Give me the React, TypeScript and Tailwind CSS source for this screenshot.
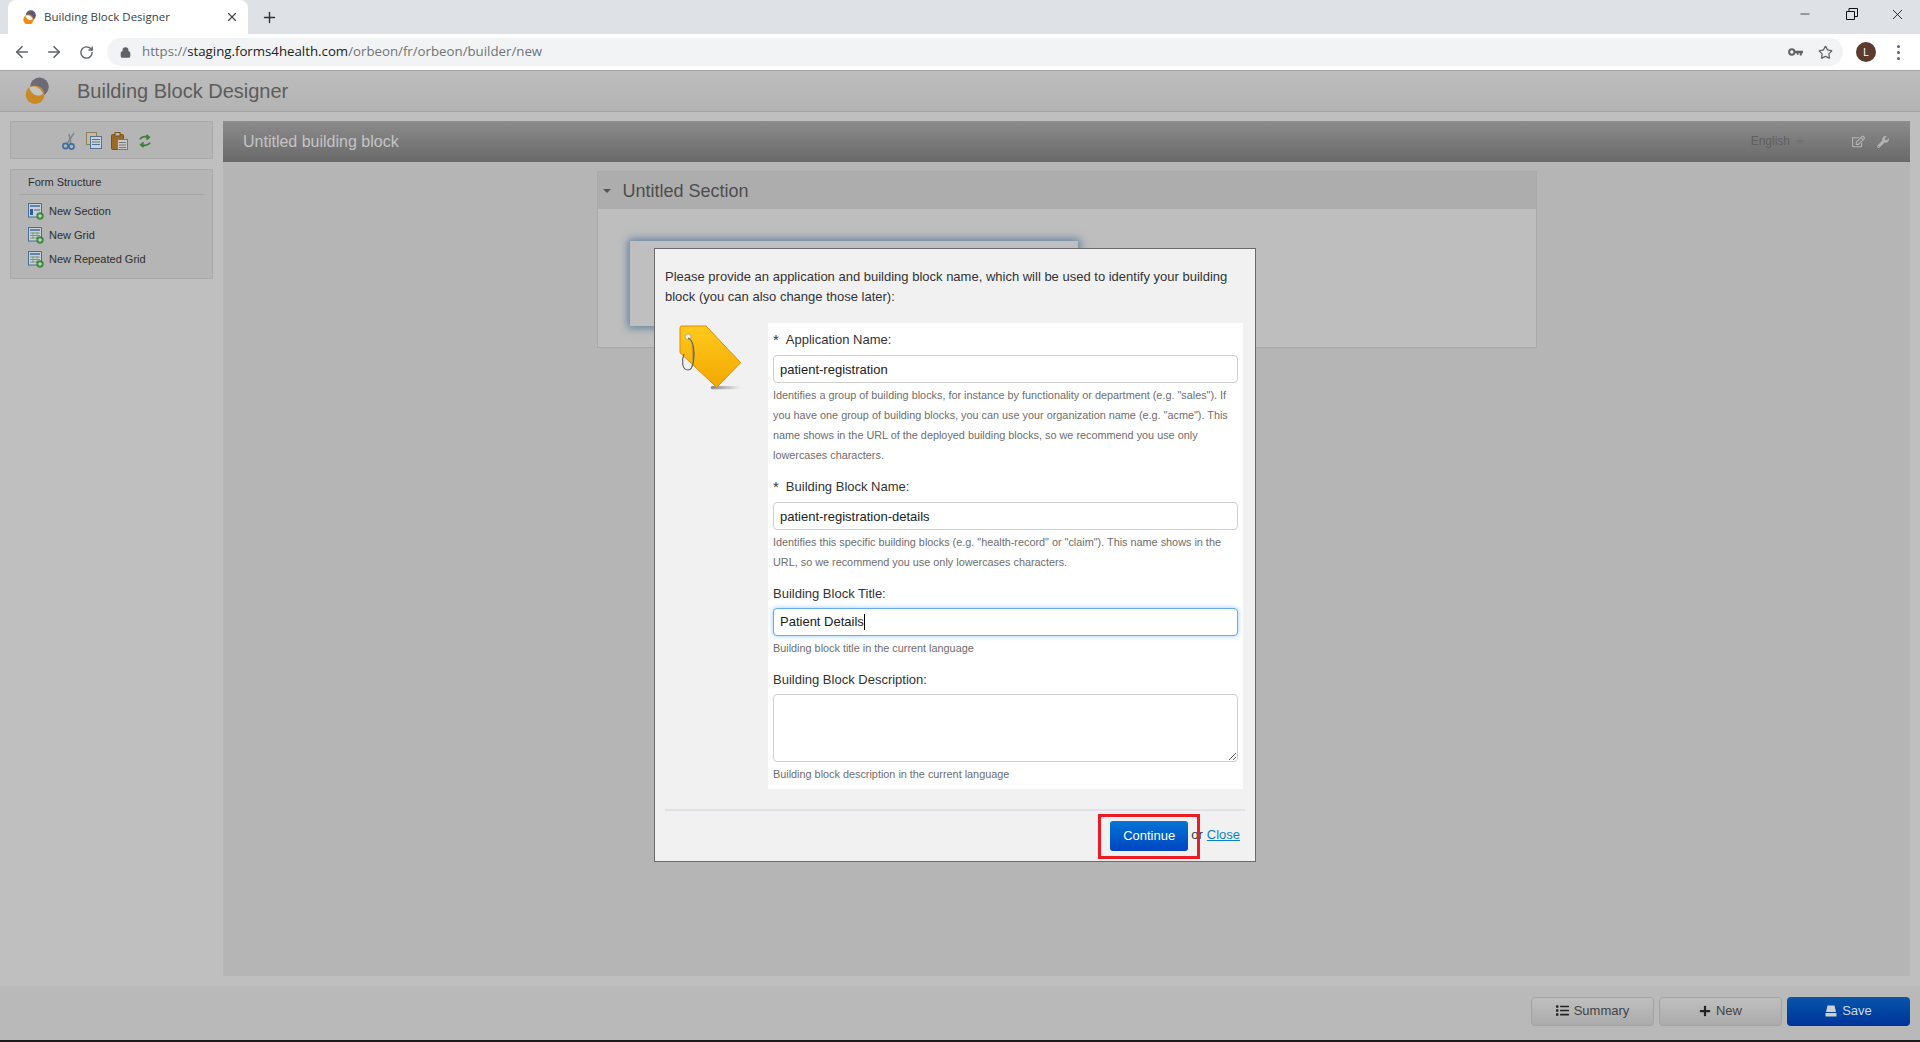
import { ArrowLeft, ArrowRight, RotateCw, Lock, Star, X, Plus, Minus } from "lucide-react";
import { FaList, FaPlus, FaWrench, FaRegEdit } from "react-icons/fa";
import type { ReactNode } from "react";

const Sans = "font-['Liberation_Sans',Arial,sans-serif]";

function Favicon({ size, dim }: { size: number; dim?: boolean }) {
  return (
    <svg width={size} height={size * 1.15} viewBox="0 0 24 28">
      <circle cx="14.5" cy="10" r="9.5" fill={dim ? "#6d6a78" : "#5e5a78"} />
      <circle cx="10" cy="18" r="9.5" fill={dim ? "#c98a24" : "#f08a12"} />
      <path d="M4 11 C8 8 15 10 18 17 C14 21 7 19 4 11 Z" fill={dim ? "#c4c4c4" : "#ffffff"} />
    </svg>
  );
}

function GridIcon({ section }: { section?: boolean }) {
  return (
    <svg width="16" height="17" viewBox="0 0 16 17">
      <rect x="0.5" y="0.5" width="13" height="13.5" fill="#c9d0d8" stroke="#4a6d9a" />
      <rect x="2" y="2" width="10" height="2" fill="#5f87b0" />
      {section ? (
        <>
          <rect x="2" y="6" width="3" height="6" fill="#2f5f9a" />
          <rect x="6" y="6" width="6" height="2" fill="#8e9aa6" />
        </>
      ) : (
        <path d="M2 6h10M2 8.5h10M2 11h10M5 5v7M9 5v7" stroke="#7d9a80" strokeWidth="1" />
      )}
      <circle cx="12" cy="13" r="3.7" fill="#3f8a3f" />
      <path d="M12 11v4M10 13h4" stroke="#d8ecd8" strokeWidth="1" />
    </svg>
  );
}

function Field({ label, required, hint, className, children }: { label: string; required?: boolean; hint: string; className: string; children: ReactNode }) {
  return (
    <div className={className}>
      <div className="flex h-5 items-center text-[13px] text-[#333]">
        {required && <span className="mr-[7px] text-[15px] leading-5">*</span>}
        <span>{label}</span>
      </div>
      {children}
      <p className="mt-[2px] text-[10.85px] leading-5 text-[#6e6e6e]">{hint}</p>
    </div>
  );
}

const inputClass = "mt-[5px] block h-7 w-full rounded-[4px] border border-[#cfcfcf] bg-white px-[6px] text-[13px] text-[#222] outline-none";

export default function App() {
  return (
    <div className={`${Sans} relative flex h-[1042px] w-[1920px] flex-col overflow-hidden bg-[#bfbfbf]`}>
      {/* browser tab strip */}
      <div className="flex h-[34px] items-end bg-[#dee1e6]">
        <div className="ml-2 flex h-[34px] w-[240px] items-center rounded-t-lg bg-white pl-[15px] pr-[9px]">
          <Favicon size={13} />
          <span className="ml-2 flex-1 font-['Open_Sans',sans-serif] text-[11.5px] text-[#3c4043]">Building Block Designer</span>
          <X size={14} className="text-[#444]" />
        </div>
        <div className="ml-[13px] flex h-[34px] items-center">
          <Plus size={17} strokeWidth={2} className="text-[#333]" />
        </div>
        <div className="ml-auto flex h-[28px] items-center self-start pr-[14px] text-[#111]">
          <Minus size={14} strokeWidth={1.2} />
          <svg width="12" height="12" viewBox="0 0 12 12" className="ml-[34px]" fill="none" stroke="#111">
            <path d="M0.5 3.5h8v8h-8zM3 3.5V0.5h8.5v8H8.5" />
          </svg>
          <X size={17} strokeWidth={1.2} className="ml-[31px]" />
        </div>
      </div>

      {/* browser toolbar */}
      <div className="flex h-9 items-center bg-white">
        <ArrowLeft size={18} strokeWidth={2.2} className="ml-[13px] text-[#5f6368]" />
        <ArrowRight size={18} strokeWidth={2.2} className="ml-[14px] text-[#5f6368]" />
        <RotateCw size={15} strokeWidth={2.2} className="ml-[16px] text-[#5f6368]" />
        <div className="ml-[13px] flex h-7 w-[1736px] items-center rounded-full bg-[#f1f3f4] pl-[13px] pr-[10px]">
          <Lock size={11} strokeWidth={3} className="text-[#5f6368]" fill="#5f6368" />
          <span className="ml-[11px] font-['Open_Sans',sans-serif] text-[13.25px] text-[#6f7377]">
            https://<span className="text-[#202124]">staging.forms4health.com</span>/orbeon/fr/orbeon/builder/new
          </span>
          <svg width="15" height="9" viewBox="0 0 15 9" className="ml-auto">
            <circle cx="3.8" cy="4" r="2.7" fill="none" stroke="#5f6368" strokeWidth="2" />
            <path d="M6 2.8h9v2.4h-1.2v2.4h-2V5.2h-1.2v1.6H8.8V5.2H6z" fill="#5f6368" />
          </svg>
          <Star size={15} strokeWidth={2} className="ml-[15px] text-[#5f6368]" />
        </div>
        <div className="ml-[13px] flex h-5 w-5 items-center justify-center rounded-full bg-[#5d3a2e] text-[10px] text-white">L</div>
        <div className="ml-[21px] flex flex-col gap-[3px]">
          <span className="h-[3px] w-[3px] rounded-full bg-[#5f6368]" />
          <span className="h-[3px] w-[3px] rounded-full bg-[#5f6368]" />
          <span className="h-[3px] w-[3px] rounded-full bg-[#5f6368]" />
        </div>
      </div>

      {/* app header */}
      <div className="flex h-[42px] items-center border-y border-[#a3a3a3] bg-gradient-to-b from-[#bdbdbd] to-[#b3b3b3] pl-[25px]">
        <Favicon size={24} dim />
        <h1 className="ml-[28px] text-[20px] font-normal text-[#5c5c5c]">Building Block Designer</h1>
      </div>

      {/* workspace */}
      <div className="flex flex-1 gap-[10px] px-[10px] pt-[9px]">
        <aside className="w-[203px] shrink-0">
          <div className="flex h-[38px] items-center justify-center gap-[9px] border border-[#a9a9a9] bg-[#b5b5b5] pr-3 pt-px">
            <svg width="16" height="18" viewBox="0 0 16 18" fill="none">
              <path d="M13 1 L6 12 M8 2 L10 12" stroke="#7c8a96" strokeWidth="1.6" />
              <circle cx="4.5" cy="14" r="2.6" stroke="#3d6fa3" strokeWidth="1.6" />
              <circle cx="10.5" cy="14.5" r="2.6" stroke="#3d6fa3" strokeWidth="1.6" />
            </svg>
            <svg width="16" height="17" viewBox="0 0 16 17">
              <rect x="0.5" y="0.5" width="10" height="12" fill="#c8bb96" stroke="#8a7f5f" />
              <rect x="4.5" y="4.5" width="11" height="12" fill="#cdd2d6" stroke="#4f7296" />
              <path d="M6 7.5h8M6 10h8M6 12.5h8" stroke="#4f7296" />
            </svg>
            <svg width="17" height="18" viewBox="0 0 17 18">
              <rect x="0.5" y="2.5" width="12" height="15" rx="1" fill="#9c6a26" stroke="#7a5218" />
              <rect x="4" y="0.5" width="5" height="3.5" fill="#b9b9b9" stroke="#7a5218" />
              <rect x="6.5" y="7.5" width="10" height="10" fill="#c9c9c9" stroke="#777" />
              <path d="M8 10.5h7M8 13h7M8 15.5h7" stroke="#777" />
            </svg>
            <svg width="12" height="14" viewBox="0 0 13 14" fill="none" stroke="#3f7f3f" strokeWidth="2" className="ml-[2px]">
              <path d="M1 5 C3 2 7 2 10 3 M8 0.5 L11 3 L8 5.5" />
              <path d="M12 9 C10 12 6 12 3 11 M5 8.5 L2 11 L5 13.5" />
            </svg>
          </div>
          <div className="mt-[10px] h-[110px] border border-[#a9a9a9] bg-[#b5b5b5] px-2 text-[#2f2f2f]">
            <div className="flex h-[25px] items-end border-b border-[#a6a6a6] pb-1 pl-[9px] text-[11px] leading-4">Form Structure</div>
            <ul className="pl-[9px] pt-1 text-[11px]">
              <li className="flex h-6 items-center gap-[5px]"><GridIcon section />New Section</li>
              <li className="flex h-6 items-center gap-[5px]"><GridIcon />New Grid</li>
              <li className="flex h-6 items-center gap-[5px]"><GridIcon />New Repeated Grid</li>
            </ul>
          </div>
        </aside>

        <main className="flex h-[855px] flex-1 flex-col bg-[#b5b5b5]">
          <div className="flex h-[41px] items-center bg-gradient-to-b from-[#8c8c8c] to-[#696969] pl-5 pr-[21px]">
            <span className="text-[16px] text-[#c4c4c4]">Untitled building block</span>
            <span className="ml-auto -translate-y-px text-[12px] text-[#5f5f5f]">English</span>
            <span className="ml-[6px] h-0 w-0 border-x-[4px] border-t-[4px] border-x-transparent border-t-[#6f6f6f]" />
            <FaRegEdit size={13} className="ml-[48px] text-[#b5b5b5]" />
            <FaWrench size={12} className="ml-3 text-[#b5b5b5]" />
          </div>
          <section className="mx-auto mt-[9px] h-[177px] w-[940px] border border-[#a9a9a9] bg-[#bebebe]">
            <div className="flex h-[37px] items-center bg-[#adadad] pl-[5px] pt-px text-[18px] text-[#4d4d4d]">
              <span className="h-0 w-0 border-x-[4px] border-t-[4px] border-x-transparent border-t-[#555]" />
              <span className="ml-[12px]">Untitled Section</span>
            </div>
            <div className="ml-8 mt-8 h-[85px] w-[448px] bg-[#bfbfbf] shadow-[0_0_8px_2px_#5f7f9f]" />
          </section>
        </main>
      </div>

      {/* app footer */}
      <div className="mt-auto flex h-[54px] items-start justify-end gap-[5px] bg-[#b9b9b9] pr-[10px] pt-[11px] text-[13px]">
        <button className="flex h-[29px] w-[123px] items-center justify-center gap-[5px] rounded-[4px] border border-[#a3a3a3] bg-gradient-to-b from-[#bfbfbf] to-[#ababab] pb-[2px] text-[#444]">
          <FaList size={13} className="text-[#222]" />Summary
        </button>
        <button className="flex h-[29px] w-[123px] items-center justify-center gap-[5px] rounded-[4px] border border-[#a3a3a3] bg-gradient-to-b from-[#bfbfbf] to-[#ababab] pb-[2px] text-[#444]">
          <FaPlus size={12} className="text-[#222]" />New
        </button>
        <button className="flex h-[29px] w-[123px] items-center justify-center gap-[5px] rounded-[4px] bg-gradient-to-b from-[#0a55a8] to-[#00339c] pb-[2px] text-[#cfd8e6]">
          <svg width="12" height="12" viewBox="0 0 12 12" fill="#d0d0d0">
            <path d="M2.5 0.5h7L11 7H1Z" />
            <rect x="0.5" y="8" width="11" height="3.5" rx="0.5" />
          </svg>
          Save
        </button>
      </div>
      <div className="h-[2px] bg-[#1b1b1b]" />

      {/* dialog */}
      <div className="absolute left-[654px] top-[248px] h-[614px] w-[602px] border border-[#6a6a6a] bg-[#f1f1f1] px-[10px] pt-[18px]">
        <p className="text-[13px] leading-5 text-[#333]">
          Please provide an application and building block name, which will be used to identify your building block (you can also change those later):
        </p>
        <div className="mt-4 flex">
          <svg width="103" height="80" viewBox="15 39 309 240" className="shrink-0">
            <defs>
              <linearGradient id="tag" x1="0" y1="0" x2="0" y2="1">
                <stop offset="0" stopColor="#ffc91c" />
                <stop offset="1" stopColor="#f3a800" />
              </linearGradient>
              <linearGradient id="tagShadow" x1="0" y1="0" x2="1" y2="0">
                <stop offset="0" stopColor="#888" />
                <stop offset="1" stopColor="#f1f1f1" />
              </linearGradient>
              <linearGradient id="ringShade" x1="0" y1="0" x2="1" y2="0">
                <stop offset="0" stopColor="#ffc91c" />
                <stop offset="1" stopColor="#a8811a" />
              </linearGradient>
            </defs>
            <rect x="152" y="228" width="88" height="10" rx="5" fill="url(#tagShadow)" />
            <path d="M64 48 H138 L242 158 L170 232 L60 128 V54 Q60 48 64 48 Z" fill="url(#tag)" stroke="#e58a00" strokeWidth="3" strokeLinejoin="round" />
            <path d="M90 88 C96 110 98 150 94 172 L102 150 C104 125 100 100 90 88 Z" fill="url(#ringShade)" />
            <circle cx="84" cy="80" r="9" fill="#f1f1f1" stroke="#c88a00" strokeWidth="2" />
            <path d="M72 132 C64 152 66 180 84 180 C100 180 106 140 100 110 C98 98 94 88 84 84" fill="none" stroke="#5f6468" strokeWidth="3.5" />
          </svg>
          <div className="h-[466px] w-[475px] bg-white px-[5px] pt-[7px]">
            <Field required label="Application Name:" hint={'Identifies a group of building blocks, for instance by functionality or department (e.g. "sales"). If you have one group of building blocks, you can use your organization name (e.g. "acme"). This name shows in the URL of the deployed building blocks, so we recommend you use only lowercases characters.'} className="">
              <input readOnly value="patient-registration" className={inputClass} />
            </Field>
            <Field required label="Building Block Name:" hint={'Identifies this specific building blocks (e.g. "health-record" or "claim"). This name shows in the URL, so we recommend you use only lowercases characters.'} className="mt-3">
              <input readOnly value="patient-registration-details" className={inputClass} />
            </Field>
            <Field label="Building Block Title:" hint="Building block title in the current language" className="mt-3">
              <div className="mt-1 flex h-7 items-center rounded-[4px] border border-[#62aeea] bg-white px-[6px] text-[13px] text-[#222] shadow-[0_0_5px_rgba(82,168,236,0.6)]">
                Patient Details<span className="h-4 w-px bg-black" />
              </div>
            </Field>
            <Field label="Building Block Description:" hint="Building block description in the current language" className="mt-3">
              <textarea readOnly className="mt-1 block h-[68px] w-full rounded-[4px] border border-[#cfcfcf] bg-white outline-none" />
            </Field>
          </div>
        </div>
        <div className="mt-5 flex h-[52px] items-start justify-end border-t-2 border-[#e0e0ea] pr-[5px] pt-[10px] text-[13px] text-[#333]">
          <div className="relative">
            <button className="h-[30px] w-[78px] rounded-[3px] bg-gradient-to-b from-[#0b74d4] to-[#0044c0] text-[13px] font-normal text-white">Continue</button>
            <span className="absolute -inset-x-3 -bottom-2 -top-[7px] border-[3px] border-[#ed1c24]" />
          </div>
          <span className="ml-[3px] leading-[28px]">or</span>
          <a className="ml-1 leading-[28px] text-[#0a84c6] underline">Close</a>
        </div>
      </div>
    </div>
  );
}
